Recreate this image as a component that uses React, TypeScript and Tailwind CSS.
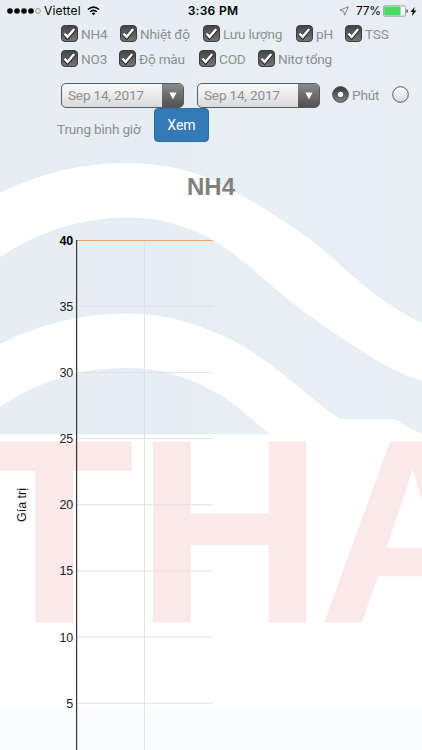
import React from 'react';

const pollutants = [
  [
    { label: 'NH4', width: 'w-[59px]' },
    { label: 'Nhiệt độ', width: 'w-[83px]' },
    { label: 'Lưu lượng', width: 'w-[93px]' },
    { label: 'pH', width: 'w-[49px]' },
    { label: 'TSS', width: 'w-[60px]' },
  ],
  [
    { label: 'NO3', width: 'w-[58px]' },
    { label: 'Độ màu', width: 'w-[80px]' },
    { label: 'COD', width: 'w-[59px]' },
    { label: 'Nitơ tổng', width: 'w-[90px]' },
  ],
];

const ticks = [40, 35, 30, 25, 20, 15, 10, 5];

// company logo behind the page
const Watermark = () => (
  <svg
    className="absolute top-0 left-0 -z-10"
    width="422"
    height="750"
    viewBox="0 0 422 750"
    aria-hidden="true"
  >
    <defs>
      <linearGradient id="sky" x1="0" x2="1" y1="0" y2="0">
        <stop offset="0" stopColor="#e6eef4" />
        <stop offset="0.05" stopColor="#e6eef3" />
        <stop offset="0.22" stopColor="#e6eef2" />
        <stop offset="0.26" stopColor="#e6edf5" />
        <stop offset="0.45" stopColor="#e6eef4" />
        <stop offset="0.5" stopColor="#e7eff2" />
        <stop offset="0.71" stopColor="#e7eff3" />
        <stop offset="0.75" stopColor="#e7eef6" />
        <stop offset="0.89" stopColor="#e7eef5" />
        <stop offset="0.92" stopColor="#e7eff2" />
        <stop offset="1" stopColor="#e7eff2" />
      </linearGradient>
    </defs>
    <rect width="422" height="750" fill="#fff" />
    <rect width="422" height="435" fill="url(#sky)" />
    <path
      fill="#fff"
      d="M0 193C40 173 83 163 125 163C167 163 203 172 236 192C262 207 286 222 311 240C336 260 359 283 383 300C396 309 409 317 422 323V381C398 374 376 360 354 346C331 331 310 317 289 300C264 280 242 258 218 243C190 226 160 217.500 128 217.500C83 217.500 39 231 0 257Z"
    />
    <path
      fill="#fff"
      d="M0 344C40 324 83 313.500 125 313.500C155 313.500 184 319 211 331C227 337 241 344 254 353C284 373 311 398 339 419H394C404 425 413 430 422 434V436H0V434.500H269.500C260 426 251 418 241 410C232 402 222 395 211 390C185 375 157 368 127 368C82 368 40 380 0 407Z"
    />
    <rect y="706" width="422" height="44" fill="#fbfcfe" />
    <g
      fill="#fbe9e9"
      fontFamily="'Liberation Sans', Arial, sans-serif"
      fontWeight="700"
      fontSize="263"
      letterSpacing="0"
    >
      <text x="-26" y="622.500">T</text>
      <text transform="translate(135.700 622.500) scale(0.99 1)">H</text>
      <text x="317.500" y="622.500">A</text>
    </g>
  </svg>
);

const StatusBar = () => (
  <div className="grid h-[22px] grid-cols-3 items-center font-['Inter'] text-[12px] leading-none text-black">
    <div className="flex items-center pl-[7px]">
      <svg width="35" height="8" viewBox="0 0 35 8">
        {[3, 10, 17, 24].map((x) => (
          <circle key={x} cx={x} cy="4" r="2.800" />
        ))}
        <circle cx="31" cy="4" r="2.400" fill="none" stroke="#777" strokeWidth="0.700" />
      </svg>
      <span className="ml-[2px] w-[37px] tracking-[0.2px] whitespace-nowrap">Viettel</span>
      <svg className="ml-[6px]" width="13" height="10" viewBox="0 0 13 10" fill="none" stroke="#000">
        <path d="M0.900 3.500Q6.500 -1.200 12.100 3.500" strokeWidth="1.600" />
        <path d="M3.100 5.800Q6.500 2.900 9.900 5.800" strokeWidth="1.500" />
        <path d="M4.600 7.300Q6.500 5.900 8.400 7.300L6.500 9.300Z" fill="#000" stroke="none" />
      </svg>
    </div>
    <span className="pl-[4px] text-center text-[12px] font-semibold tracking-[0.3px] whitespace-nowrap">
      3:36 PM
    </span>
    <div className="flex items-center justify-end pr-[5px]">
      <svg width="10" height="10" viewBox="0 0 10 10" fill="none" stroke="#6d7277" strokeWidth="0.800">
        <path d="M9.300 0.700L0.900 4.200L4.700 5.300L5.600 9.200Z" />
      </svg>
      <span className="mr-[3px] ml-[7px] w-[24px] text-right tracking-[-0.3px] whitespace-nowrap">77%</span>
      <svg width="26" height="12" viewBox="0 0 26 12">
        <rect x="0.500" y="0.800" width="22" height="10.400" rx="1.500" fill="#f5f8fa" stroke="#7e8589" strokeWidth="0.700" />
        <rect x="1.200" y="1.500" width="16.300" height="9" rx="0.700" fill="#4cd964" />
        <path d="M23.500 4V8Q25 7.500 25 6T23.500 4Z" fill="#555" />
      </svg>
      <svg className="ml-[1px]" width="7" height="9" viewBox="0 0 7 9">
        <path d="M4.600 0L0.500 5.100H2.800L1.900 9L6.500 3.600H4Z" />
      </svg>
    </div>
  </div>
);

const Checkbox = ({ label, width }: { label: string; width: string }) => (
  <label className={`flex shrink-0 items-center gap-[3px] ${width}`}>
    <svg className="shrink-0" width="17" height="17" viewBox="0 0 17 17">
      <defs>
        <linearGradient id="check" x1="0" x2="0" y1="0" y2="1">
          <stop offset="0" stopColor="#444446" />
          <stop offset="1" stopColor="#777779" />
        </linearGradient>
      </defs>
      <rect x="0.500" y="0.500" width="16" height="16" rx="3.500" fill="url(#check)" stroke="#3b3c3e" />
      <path d="M3.300 8.800L6.600 12.200L13.400 4" fill="none" stroke="#222" strokeWidth="4" />
      <path d="M3.500 8.700L6.600 11.900L13.200 4" fill="none" stroke="#fff" strokeWidth="2.500" />
    </svg>
    <span className="pt-[2px] whitespace-nowrap">{label}</span>
  </label>
);

const DateSelect = () => (
  <div className="flex h-[25px] w-[123px] shrink-0 overflow-hidden rounded-[5px] border border-[#5a5b5d] bg-linear-to-b from-[#fafafa] to-[#d9dadb]">
    <span className="flex-1 pl-[6px] leading-[23px] whitespace-nowrap">
      Sep 14, 2017
    </span>
    <span className="flex w-[21px] items-center justify-center bg-linear-to-b from-[#8a8a8b] to-[#515152]">
      <svg width="8" height="8" viewBox="0 0 8 8">
        <path d="M0.500 0.500H7.500L4 7.500Z" fill="#fff" />
      </svg>
    </span>
  </div>
);

const Radio = ({ checked = false }: { checked?: boolean }) => (
  <svg className="shrink-0" width="17" height="17" viewBox="0 0 17 17">
    <defs>
      <linearGradient id="radioOn" x1="0" x2="0" y1="0" y2="1">
        <stop offset="0" stopColor="#39393b" />
        <stop offset="1" stopColor="#88888a" />
      </linearGradient>
      <linearGradient id="radioOff" x1="0" x2="0" y1="0" y2="1">
        <stop offset="0" stopColor="#fff" />
        <stop offset="1" stopColor="#d8d9da" />
      </linearGradient>
    </defs>
    <circle
      cx="8.500"
      cy="8.500"
      r="7.800"
      fill={checked ? 'url(#radioOn)' : 'url(#radioOff)'}
      stroke={checked ? '#3f4042' : '#58595b'}
      strokeWidth="1"
    />
    {checked && <circle cx="8.500" cy="8.500" r="3.300" fill="#fff" stroke="#2b2b2d" strokeWidth="0.800" />}
  </svg>
);

const Chart = () => (
  <svg
    className="block"
    width="422"
    height="546"
    viewBox="0 204 422 546"
    fontFamily="'Liberation Sans', Arial, sans-serif"
    fontSize="12.500"
    letterSpacing="0"
  >
    {ticks.slice(1).map((tick, i) => (
      <path key={tick} d={`M77 ${306.3 + i * 66.15}H213`} stroke="#e2e2e3" />
    ))}
    <path d="M144.500 241V750" stroke="#e2e2e3" />
    <path d="M77 240.500H213" stroke="#f2a166" strokeWidth="1.200" />
    <path d="M76.600 240V750" stroke="#333538" strokeWidth="1.200" />
    {ticks.map((tick, i) => (
      <text
        key={tick}
        x="73.300"
        y={244.6 + i * 66.15}
        textAnchor="end"
        fontWeight={i === 0 ? 700 : 400}
        fill={i === 0 ? '#000' : '#222'}
      >
        {tick}
      </text>
    ))}
    <text transform="translate(25.500 505) rotate(-90)" textAnchor="middle" fill="#111">
      Gía trị
    </text>
  </svg>
);

const App = () => (
  <div className="relative isolate h-[750px] w-[422px] overflow-hidden font-['Roboto','Noto_Sans',sans-serif] text-[13.6px] tracking-[-0.2px] text-[#8d8f91]">
    <Watermark />
    <StatusBar />
    <div className="flex h-[22px] items-center pl-[61px]">
      {pollutants[0].map((item) => (
        <Checkbox key={item.label} {...item} />
      ))}
    </div>
    <div className="mt-[3px] flex h-[23px] items-center pl-[61px]">
      {pollutants[1].map((item) => (
        <Checkbox key={item.label} {...item} />
      ))}
    </div>
    <div className="mt-[13px] flex h-[25px] items-center pl-[61px]">
      <DateSelect />
      <div className="w-[13px]" />
      <DateSelect />
      <div className="mb-[3px] ml-[12px] flex items-center">
        <Radio checked />
        <span className="ml-[3px] w-[40px] pt-[3px]">Phút</span>
        <Radio />
      </div>
    </div>
    <div className="flex h-[34px] items-start pl-[57px]">
      <span className="w-[97px] pt-[12px] leading-[18px] whitespace-nowrap">
        Trung bình giờ
      </span>
      <button
        type="button"
        className="h-[34px] w-[55px] rounded-[4px] border border-[#2e6da4] bg-[#337ab7] text-[14px] leading-[30px] tracking-normal text-white"
      >
        Xem
      </button>
    </div>
    <h1 className="mt-[30px] h-[32px] text-center font-['Liberation_Sans',Arial,sans-serif] text-[24px] leading-[29px] font-bold tracking-normal text-[#808080]">
      NH4
    </h1>
    <Chart />
  </div>
);

export default App;
